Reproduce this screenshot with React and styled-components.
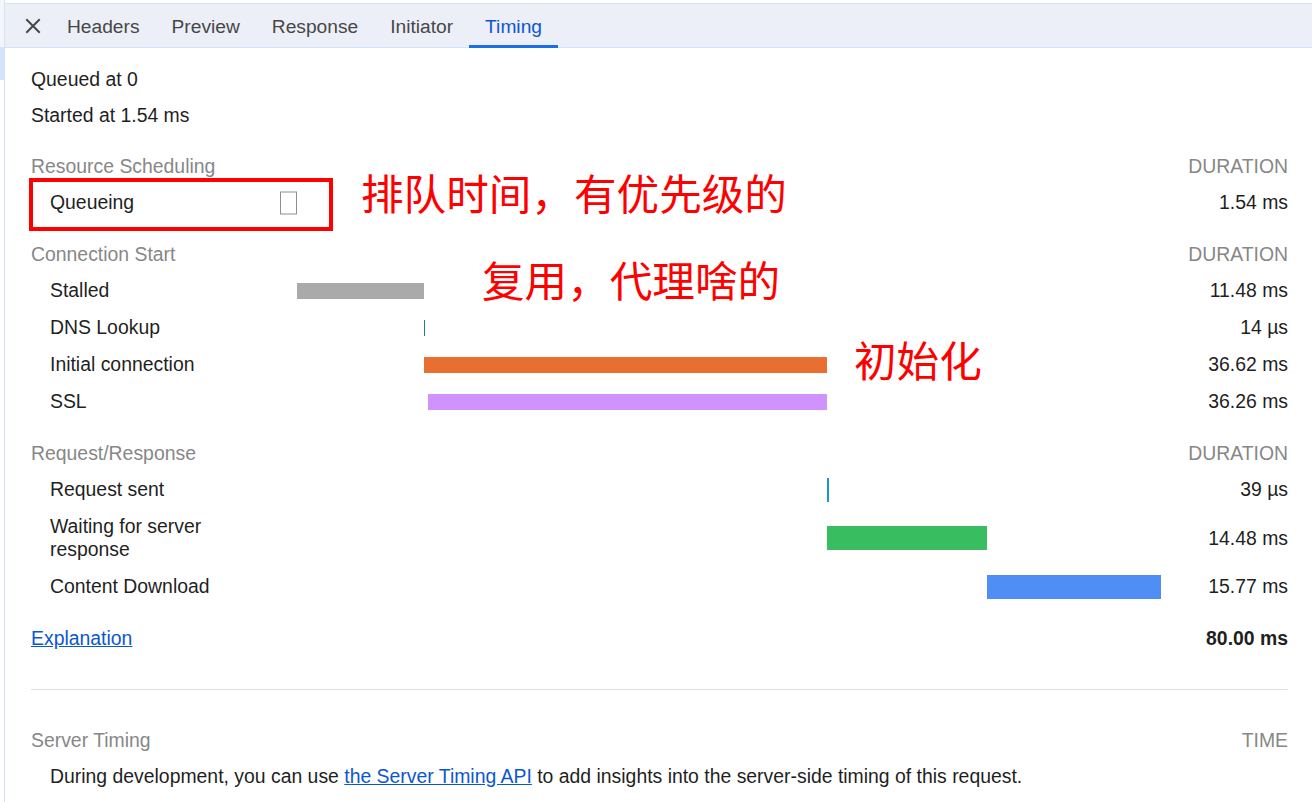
import React from "react";
import styled, { createGlobalStyle, css } from "styled-components";

const GlobalStyle = createGlobalStyle`
  html, body { margin: 0; padding: 0; background: #fff; }
  body {
    font-family: "Liberation Sans", Arial, Helvetica, sans-serif;
    color: #1f1f1f;
  }
  * { box-sizing: border-box; }
`;

const Page = styled.div`
  display: flex;
  width: 1312px;
  height: 802px;
  overflow: hidden;
  background: #fff;
`;

const Rail = styled.div`
  width: 5px;
  flex: none;
  display: flex;
  flex-direction: column;
  border-right: 1px solid #d6e1f3;
`;

const RailTop = styled.div`
  height: 47px;
  background: #f3f6fb;
`;

const RailActive = styled.div`
  height: 33px;
  background: #d3e3fd;
`;

const Main = styled.div`
  flex: 1;
  min-width: 0;
  padding-top: 3px;
  display: flex;
  flex-direction: column;
`;

const TabBar = styled.div`
  height: 45px;
  display: flex;
  align-items: stretch;
  background: #eceff7;
  border-top: 1px solid #d3e3fd;
  border-bottom: 1px solid #d3e3fd;
  padding-left: 9px;
`;

const CloseButton = styled.div`
  width: 37px;
  display: flex;
  align-items: center;
  justify-content: center;
  color: #474747;
`;

const Tab = styled.div`
  position: relative;
  display: flex;
  align-items: center;
  padding: 1px 16px 0;
  font-size: 19.2px;
  color: ${(p) => (p.$active ? "#0b57d0" : "#474747")};
  margin-bottom: -1px;
  ${(p) =>
    p.$active &&
    css`
      &::after {
        content: "";
        position: absolute;
        left: 0;
        right: 0;
        bottom: 0;
        height: 3px;
        background: #1a6fe6;
      }
    `}
`;

const Panel = styled.div`
  position: relative;
  flex: 1;
  padding: 13px 24px 0 26px;
  font-size: 19.4px;
`;

const InfoLine = styled.div`
  line-height: 36px;
  height: 36px;
`;

const Section = styled.div`
  margin-top: ${(p) => p.$gap || 15}px;
`;

const Grid = styled.div`
  display: grid;
  grid-template-columns: 249px 881px 1fr;
  align-items: center;
`;

const HeaderRow = styled(Grid)`
  height: 36px;
  color: #878787;
`;

const HeaderTitle = styled.div`
  grid-column: 1 / 3;
`;

const HeaderCol = styled.div`
  text-align: right;
  text-transform: uppercase;
`;

const Row = styled(Grid)`
  align-items: stretch;
`;

const Label = styled.div`
  padding: 7px 20px 7px 19px;
  line-height: 23px;
`;

const BarCell = styled.div`
  position: relative;
`;

const barColors = {
  queueing: "#ffffff",
  stalled: "#aaaaaa",
  dns: "#1f7c92",
  connecting: "#e86f30",
  ssl: "#d093fd",
  sending: "#1899c6",
  waiting: "#38be61",
  download: "#4e8ef5",
};

const Bar = styled.div`
  position: absolute;
  top: 50%;
  height: ${(p) => (p.$tall ? 24 : 16)}px;
  transform: translateY(-50%);
  min-width: 1px;
  background: ${(p) => barColors[p.$kind]};
  ${(p) =>
    p.$kind === "queueing" &&
    css`
      height: 23px;
      border: 1px solid #8f8f8f;
    `}
`;

const Value = styled.div`
  display: flex;
  align-items: center;
  justify-content: flex-end;
  line-height: 23px;
  font-weight: ${(p) => (p.$bold ? 700 : 400)};
`;

const LinkText = styled.a`
  color: #0b57d0;
  text-decoration: underline;
  cursor: pointer;
`;

const ExplanationCell = styled.div`
  display: flex;
  align-items: center;
  height: 36px;
  grid-column: 1 / 3;
`;

const Divider = styled.hr`
  border: none;
  border-top: 1px solid #d9e1ec;
  margin: 33px 0 32px;
`;

const Description = styled.div`
  line-height: 36px;
  padding-left: 19px;
`;

const Annotation = styled.div`
  position: absolute;
  left: ${(p) => p.$x}px;
  top: ${(p) => p.$y}px;
  font-family: "Noto Sans CJK SC", "Noto Sans", sans-serif;
  font-size: 42.6px;
  line-height: 42px;
  color: #ff0000;
  white-space: nowrap;
  pointer-events: none;
`;

const Highlight = styled.div`
  position: absolute;
  left: 24px;
  top: 130px;
  width: 304px;
  height: 53px;
  border: 4px solid #ff0000;
  pointer-events: none;
`;

const TIMELINE_PX = 881;
const TOTAL_MS = 80;

const sections = [
  {
    title: "Resource Scheduling",
    gap: 15,
    tall: false,
    rows: [{ label: "Queueing", kind: "queueing", start: 0, dur: 1.54, value: "1.54 ms" }],
  },
  {
    title: "Connection Start",
    tall: false,
    rows: [
      { label: "Stalled", kind: "stalled", start: 1.54, dur: 11.55, value: "11.48 ms" },
      { label: "DNS Lookup", kind: "dns", start: 13.06, dur: 0.014, value: "14 µs" },
      { label: "Initial connection", kind: "connecting", start: 13.06, dur: 36.6, value: "36.62 ms" },
      { label: "SSL", kind: "ssl", start: 13.42, dur: 36.24, value: "36.26 ms" },
    ],
  },
  {
    title: "Request/Response",
    tall: true,
    rows: [
      { label: "Request sent", kind: "sending", start: 49.66, dur: 0.17, value: "39 µs" },
      { label: "Waiting for server response", kind: "waiting", start: 49.69, dur: 14.48, value: "14.48 ms" },
      { label: "Content Download", kind: "download", start: 64.17, dur: 15.8, value: "15.77 ms" },
    ],
  },
];

function CloseIcon() {
  return (
    <svg width="16" height="16" viewBox="0 0 16 16" fill="none">
      <path d="M2 2 L14 14 M14 2 L2 14" stroke="currentColor" strokeWidth="2" strokeLinecap="square" />
    </svg>
  );
}

const pxFor = (ms) => (ms / TOTAL_MS) * TIMELINE_PX;

export default function App() {
  const tabs = ["Headers", "Preview", "Response", "Initiator", "Timing"];
  return (
    <>
      <GlobalStyle />
      <Page>
        <Rail>
          <RailTop />
          <RailActive />
        </Rail>
        <Main>
          <TabBar>
            <CloseButton>
              <CloseIcon />
            </CloseButton>
            {tabs.map((t) => (
              <Tab key={t} $active={t === "Timing"}>
                {t}
              </Tab>
            ))}
          </TabBar>
          <Panel>
            <InfoLine>Queued at 0</InfoLine>
            <InfoLine>Started at 1.54 ms</InfoLine>

            {sections.map((s) => (
              <Section key={s.title} $gap={s.gap}>
                <HeaderRow>
                  <HeaderTitle>{s.title}</HeaderTitle>
                  <HeaderCol>Duration</HeaderCol>
                </HeaderRow>
                {s.rows.map((r) => (
                  <Row key={r.label}>
                    <Label>{r.label}</Label>
                    <BarCell>
                      <Bar
                        $kind={r.kind}
                        $tall={s.tall}
                        style={{
                          left: `${pxFor(r.start)}px`,
                          width: `${Math.max(pxFor(r.dur), r.kind === "sending" ? 2 : 1)}px`,
                        }}
                      />
                    </BarCell>
                    <Value>{r.value}</Value>
                  </Row>
                ))}
              </Section>
            ))}

            <Section>
              <Grid>
                <ExplanationCell>
                  <LinkText>Explanation</LinkText>
                </ExplanationCell>
                <Value $bold>80.00 ms</Value>
              </Grid>
            </Section>

            <Divider />

            <HeaderRow>
              <HeaderTitle>Server Timing</HeaderTitle>
              <HeaderCol>Time</HeaderCol>
            </HeaderRow>
            <Description>
              During development, you can use <LinkText>the Server Timing API</LinkText> to add insights
              into the server-side timing of this request.
            </Description>

            <Highlight />
            <Annotation $x={356} $y={123}>排队时间，有优先级的</Annotation>
            <Annotation $x={477} $y={210}>复用，代理啥的</Annotation>
            <Annotation $x={849} $y={290}>初始化</Annotation>
          </Panel>
        </Main>
      </Page>
    </>
  );
}
